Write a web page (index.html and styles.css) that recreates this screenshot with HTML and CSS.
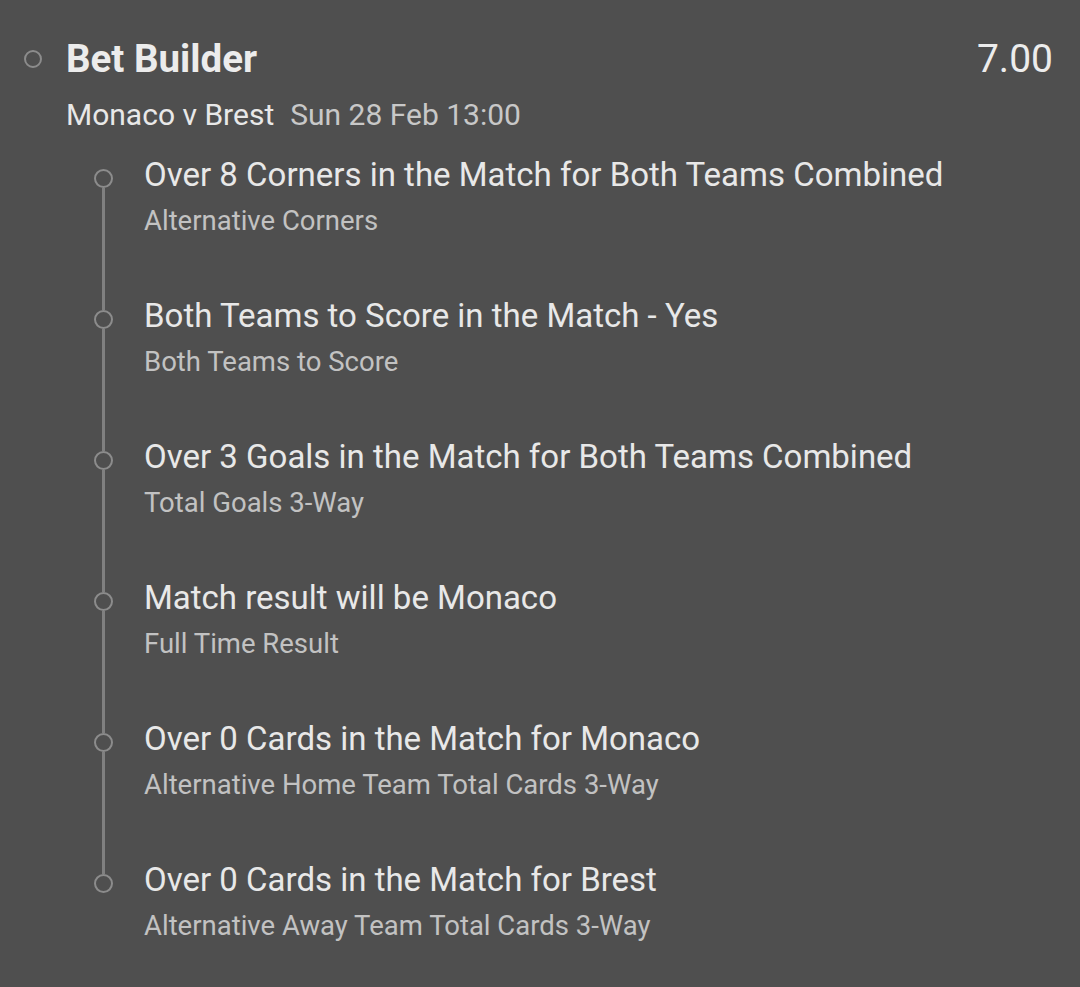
FILE: index.html
```html
<!DOCTYPE html>
<html>
<head>
<meta charset="utf-8">
<link rel="stylesheet" href="styles.css">
</head>
<body>
<div class="card">
  <div class="header">
    <span class="dot"></span>
    <div class="head-main">
      <div class="title-row">
        <span class="title">Bet Builder</span>
        <span class="odds">7.00</span>
      </div>
      <div class="event"><span class="teams">Monaco v Brest</span><span class="date">Sun 28 Feb 13:00</span></div>
    </div>
  </div>
  <ul class="legs">
    <li class="leg"><div class="marker"><span class="seg-top"></span><span class="ring"></span><span class="seg"></span></div><div class="leg-text"><div class="sel">Over 8 Corners in the Match for Both Teams Combined</div><div class="mkt">Alternative Corners</div></div></li>
    <li class="leg"><div class="marker"><span class="seg-top"></span><span class="ring"></span><span class="seg"></span></div><div class="leg-text"><div class="sel">Both Teams to Score in the Match - Yes</div><div class="mkt">Both Teams to Score</div></div></li>
    <li class="leg"><div class="marker"><span class="seg-top"></span><span class="ring"></span><span class="seg"></span></div><div class="leg-text"><div class="sel">Over 3 Goals in the Match for Both Teams Combined</div><div class="mkt">Total Goals 3-Way</div></div></li>
    <li class="leg"><div class="marker"><span class="seg-top"></span><span class="ring"></span><span class="seg"></span></div><div class="leg-text"><div class="sel">Match result will be Monaco</div><div class="mkt">Full Time Result</div></div></li>
    <li class="leg"><div class="marker"><span class="seg-top"></span><span class="ring"></span><span class="seg"></span></div><div class="leg-text"><div class="sel">Over 0 Cards in the Match for Monaco</div><div class="mkt">Alternative Home Team Total Cards 3-Way</div></div></li>
    <li class="leg"><div class="marker"><span class="seg-top"></span><span class="ring"></span><span class="seg"></span></div><div class="leg-text"><div class="sel">Over 0 Cards in the Match for Brest</div><div class="mkt">Alternative Away Team Total Cards 3-Way</div></div></li>
  </ul>
</div>
</body>
</html>
```
FILE: styles.css
```css
html, body {
  margin: 0;
  padding: 0;
  background: #4f4f4f;
  height: 100%;
}
body {
  font-family: Roboto, "Liberation Sans", sans-serif;
  color: #e8e8e8;
}
.card {
  padding: 37px 27px 0 24px;
}
.header {
  display: flex;
  align-items: flex-start;
}
.dot {
  flex: 0 0 auto;
  box-sizing: border-box;
  width: 18px;
  height: 18px;
  border: 2.5px solid #8c8c8c;
  border-radius: 50%;
  margin-top: 12.5px;
  margin-right: 24px;
}
.head-main {
  flex: 1;
}
.title-row {
  display: flex;
  justify-content: space-between;
  align-items: baseline;
  line-height: 44px;
}
.title {
  font-size: 38.5px;
  font-weight: 700;
  color: #ececec;
}
.odds {
  font-size: 39px;
  font-weight: 400;
  color: #ececec;
}
.event {
  margin-top: 16px;
  font-size: 30px;
  line-height: 36px;
}
.teams {
  color: #e8e8e8;
}
.date {
  margin-left: 16px;
  color: #c8c8c8;
}
.legs {
  list-style: none;
  margin: 22px 0 0 0;
  padding: 0 0 0 70px;
}
.leg {
  display: flex;
  min-height: 141px;
}
.leg:last-child {
  min-height: 0;
}
.marker {
  flex: 0 0 19px;
  display: flex;
  flex-direction: column;
  align-items: center;
  margin-right: 31px;
}
.seg-top {
  flex: 0 0 14px;
  width: 3px;
  background: #808080;
}
.leg:first-child .seg-top {
  visibility: hidden;
}
.ring {
  flex: 0 0 auto;
  box-sizing: border-box;
  width: 19px;
  height: 19px;
  border: 2.7px solid #8c8c8c;
  border-radius: 50%;
}
.seg {
  flex: 1;
  width: 3px;
  background: #808080;
}
.leg:last-child .seg {
  visibility: hidden;
}
.leg-text {
  flex: 1;
}
.sel {
  font-size: 33px;
  line-height: 40px;
  color: #e8e8e8;
}
.mkt {
  margin-top: 10px;
  font-size: 27.5px;
  line-height: 32px;
  color: #c2c2c2;
}
```
